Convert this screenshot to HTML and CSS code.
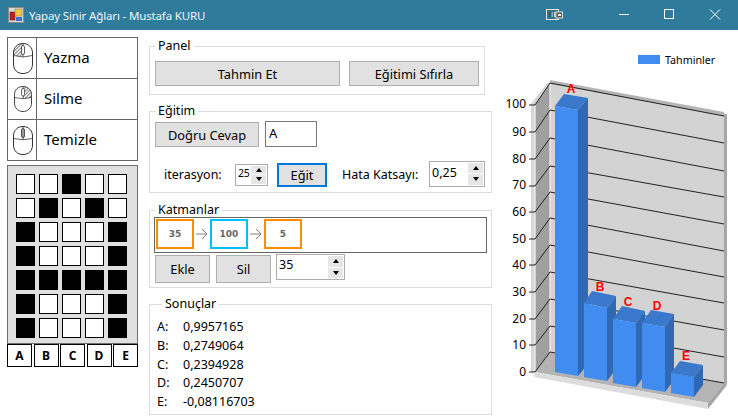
FILE: index.html
```html
<!DOCTYPE html>
<html lang="tr">
<head>
<meta charset="utf-8">
<title>Yapay Sinir Ağları</title>
<link rel="stylesheet" href="styles.css">
</head>
<body>
<header class="titlebar">
  <svg class="app-icon" width="16" height="16" viewBox="0 0 16 16">
    <rect x="0.5" y="0.5" width="15" height="15" fill="#d8d8d8" stroke="#8a8a8a"/>
    <rect x="2" y="5" width="5" height="8" fill="#c02020" stroke="#601010" stroke-width="0.5"/>
    <rect x="7" y="2" width="7" height="7" fill="#f0c840" stroke="#a08020" stroke-width="0.5"/>
    <rect x="8" y="10" width="6" height="4" fill="#4070d0"/>
  </svg>
  <span class="title">Yapay Sinir Ağları - Mustafa KURU</span>
  <svg class="win-snap" width="17" height="12" viewBox="0 0 17 12">
    <rect x="0.5" y="0.5" width="12" height="10" fill="#3d6f86" stroke="#e6e6e6"/>
    <rect x="3" y="3" width="1.5" height="5" fill="#1f5a78"/>
    <rect x="5.5" y="3" width="1.5" height="5" fill="#8fb0c0"/>
    <rect x="8" y="3" width="1.5" height="5" fill="#c8d6dd"/>
    <rect x="10" y="3" width="6.5" height="6" fill="#555" stroke="#ddd" stroke-width="1"/>
    <rect x="12" y="5" width="3" height="2" fill="#fff"/>
  </svg>
  <svg class="win-btn" width="46" height="30" viewBox="0 0 46 30"><path d="M19 14.500h10" stroke="#fff" fill="none"/></svg>
  <svg class="win-btn" width="46" height="30" viewBox="0 0 46 30"><rect x="18.500" y="9.500" width="9" height="9" stroke="#fff" fill="none"/></svg>
  <svg class="win-btn" width="46" height="30" viewBox="0 0 46 30"><path d="M18 9.500l10 10M28 9.500l-10 10" stroke="#fff" fill="none"/></svg>
</header>

<main class="app">
  <div class="left">
    <div class="tools">
      <div class="tool">
        <div class="tool-icon">
          <svg width="22" height="33" viewBox="0 0 22 33">
            <defs><pattern id="h1" width="2.500" height="2.500" patternUnits="userSpaceOnUse" patternTransform="rotate(45)"><rect width="2.500" height="2.500" fill="#fff"/><rect width="1" height="2.500" fill="#777"/></pattern></defs>
            <path d="M11 1.500C5.500 1.500 1.500 5.500 1.500 11V14H11V1.500Z" fill="url(#h1)"/>
            <path d="M11 1.500C16.500 1.500 20.500 5.500 20.500 11V22C20.500 28 16.500 31.500 11 31.500S1.500 28 1.500 22V11C1.500 5.500 5.500 1.500 11 1.500Z" fill="none" stroke="#333"/>
            <path d="M1.500 13.500Q11 16.500 20.500 13.500M11 1.500V6M11 12.500V15" fill="none" stroke="#333" stroke-width="0.8"/>
            <rect x="9.500" y="3.500" width="3" height="9" rx="1.500" fill="#fff" stroke="#333" stroke-width="0.8"/>
          </svg>
        </div>
        <div class="tool-label">Yazma</div>
      </div>
      <div class="tool">
        <div class="tool-icon">
          <svg width="20" height="28" viewBox="0 0 20 28">
            <defs><pattern id="h2" width="2.500" height="2.500" patternUnits="userSpaceOnUse" patternTransform="rotate(45)"><rect width="2.500" height="2.500" fill="#fff"/><rect width="1" height="2.500" fill="#777"/></pattern></defs>
            <path d="M10 1.500C15 1.500 18.500 5 18.500 9.500V13H10V1.500Z" fill="url(#h2)"/>
            <path d="M10 1.500C15 1.500 18.500 5 18.500 9.500V18C18.500 23 15 26.500 10 26.500S1.500 23 1.500 18V9.500C1.500 5 5 1.500 10 1.500Z" fill="none" stroke="#444"/>
            <path d="M1.500 12.500Q10 15 18.500 12.500M10 1.500V5M10 11V14" fill="none" stroke="#444" stroke-width="0.8"/>
            <rect x="8.500" y="3.500" width="3" height="7.500" rx="1.500" fill="#fff" stroke="#444" stroke-width="0.8"/>
          </svg>
        </div>
        <div class="tool-label">Silme</div>
      </div>
      <div class="tool">
        <div class="tool-icon">
          <svg width="22" height="31" viewBox="0 0 22 31">
            <path d="M11 1.500C16.500 1.500 20.500 5.500 20.500 11V20C20.500 26 16.500 29.500 11 29.500S1.500 26 1.500 20V11C1.500 5.500 5.500 1.500 11 1.500Z" fill="none" stroke="#333"/>
            <path d="M1.500 13.500Q11 16 20.500 13.500M11 1.500V5M11 12V15" fill="none" stroke="#333" stroke-width="0.8"/>
            <rect x="9.500" y="3.500" width="3" height="9" rx="1.500" fill="#999" stroke="#333" stroke-width="0.8"/>
          </svg>
        </div>
        <div class="tool-label">Temizle</div>
      </div>
    </div>

    <div class="matrix">
      <i class="px"></i><i class="px"></i><i class="px on"></i><i class="px"></i><i class="px"></i>
      <i class="px"></i><i class="px on"></i><i class="px"></i><i class="px on"></i><i class="px"></i>
      <i class="px on"></i><i class="px"></i><i class="px"></i><i class="px"></i><i class="px on"></i>
      <i class="px on"></i><i class="px"></i><i class="px"></i><i class="px"></i><i class="px on"></i>
      <i class="px on"></i><i class="px on"></i><i class="px on"></i><i class="px on"></i><i class="px on"></i>
      <i class="px on"></i><i class="px"></i><i class="px"></i><i class="px"></i><i class="px on"></i>
      <i class="px on"></i><i class="px"></i><i class="px"></i><i class="px"></i><i class="px on"></i>
    </div>
    <div class="letters">
      <div class="letter">A</div><div class="letter">B</div><div class="letter">C</div><div class="letter">D</div><div class="letter">E</div>
    </div>
  </div>

  <div class="middle">
    <fieldset class="group group-panel">
      <legend>Panel</legend>
      <div class="row-panel">
        <button class="btn btn-predict">Tahmin Et</button>
        <button class="btn btn-reset">Eğitimi Sıfırla</button>
      </div>
    </fieldset>

    <fieldset class="group group-train">
      <legend>Eğitim</legend>
      <div class="row-answer">
        <button class="btn btn-answer">Doğru Cevap</button>
        <div class="input input-answer">A</div>
      </div>
      <div class="row-iter">
        <span class="lbl lbl-iter">iterasyon:</span>
        <div class="spin spin-iter"><span class="spin-val">25</span><span class="arrows"><b class="up"></b><b class="down"></b></span></div>
        <button class="btn btn-train">Eğit</button>
        <span class="lbl lbl-err">Hata Katsayı:</span>
        <div class="spin spin-err"><span class="spin-val">0,25</span><span class="arrows"><b class="up"></b><b class="down"></b></span></div>
      </div>
    </fieldset>

    <fieldset class="group group-layers">
      <legend>Katmanlar</legend>
      <div class="layers">
        <div class="node node-orange">35</div>
        <svg class="arrow" width="16" height="14" viewBox="0 0 16 14"><path d="M2 7h11M8 2l5 5-5 5" fill="none" stroke="#808080"/></svg>
        <div class="node node-blue">100</div>
        <svg class="arrow" width="16" height="14" viewBox="0 0 16 14"><path d="M2 7h11M8 2l5 5-5 5" fill="none" stroke="#808080"/></svg>
        <div class="node node-orange">5</div>
      </div>
      <div class="row-layer">
        <button class="btn btn-layer">Ekle</button>
        <button class="btn btn-layer">Sil</button>
        <div class="spin spin-layer"><span class="spin-val">35</span><span class="arrows"><b class="up"></b><b class="down"></b></span></div>
      </div>
    </fieldset>

    <fieldset class="group group-results">
      <legend>Sonuçlar</legend>
      <div class="result"><span class="res-key">A:</span><span>0,9957165</span></div>
      <div class="result"><span class="res-key">B:</span><span>0,2749064</span></div>
      <div class="result"><span class="res-key">C:</span><span>0,2394928</span></div>
      <div class="result"><span class="res-key">D:</span><span>0,2450707</span></div>
      <div class="result"><span class="res-key">E:</span><span>-0,08116703</span></div>
    </fieldset>
  </div>

  <svg class="chart" width="243" height="390" viewBox="495 30 243 390">
    <rect x="638" y="55" width="22" height="9" fill="#418cf0"/>
    <text class="legend-text" x="665" y="64">Tahminler</text>

    <!-- walls and floor -->
    <path d="M531 104L548 82L550 83L535 105V372H531Z" fill="#d6d6d6"/>
    <path d="M535 105L550 83V352L535 372Z" fill="#a0a0a0"/>
    <path d="M550 83L724 115V383L550 352Z" fill="#d3d3d3"/>
    <path d="M550 83V352M535 105V372" stroke="#fff" fill="none"/>
    <path d="M550 80L724 112L725 116L550 84Z" fill="#b4b4b4"/>
    <path d="M724 114L727 114V385L724 383Z" fill="#a6a6a6"/>
    <path d="M535 372L550 352L724 383L708 403Z" fill="#b4b4b4"/>
    <path d="M535 372L708 403V409L534 377Z" fill="#dcdcdc"/>
    <path d="M708 403L724 383L727 385L708 409Z" fill="#a6a6a6"/>

    <!-- grid lines -->
    <g class="grid">
      <path d="M529 105H535L550 83L724 116"/>
      <path d="M529 132H535L550 110L724 143"/>
      <path d="M529 159H535L550 138L724 171"/>
      <path d="M529 186H535L550 166L724 197"/>
      <path d="M529 212H535L550 192L724 224"/>
      <path d="M529 239H535L550 218L724 251"/>
      <path d="M529 265H535L550 245L724 277"/>
      <path d="M529 292H535L550 272L724 303"/>
      <path d="M529 319H535L550 299L724 330"/>
      <path d="M529 345H535L550 326L724 357"/>
      <path d="M529 372H535L550 352L724 383"/>
    </g>

    <g class="axis">
      <text x="526" y="108">100</text>
      <text x="526" y="136">90</text>
      <text x="526" y="163">80</text>
      <text x="526" y="189">70</text>
      <text x="526" y="216">60</text>
      <text x="526" y="243">50</text>
      <text x="526" y="269">40</text>
      <text x="526" y="296">30</text>
      <text x="526" y="323">20</text>
      <text x="526" y="349">10</text>
      <text x="526" y="376">0</text>
    </g>

    <!-- bars: top, side, front -->
    <path class="bar-top" d="M555 106L578 110L588 98L564 94Z"/>
    <path class="bar-side" d="M578 110L588 98V364L578 376Z"/>
    <path class="bar-front" d="M555 106L578 110V376L555 372Z"/>

    <path class="bar-top" d="M584 303L607 308L616 296L592 291Z"/>
    <path class="bar-side" d="M607 308L616 296V369L607 381Z"/>
    <path class="bar-front" d="M584 303L607 308V381L584 377Z"/>

    <path class="bar-top" d="M613 319L636 323L645 311L622 306Z"/>
    <path class="bar-side" d="M636 323L645 311V375L636 387Z"/>
    <path class="bar-front" d="M613 319L636 323V387L613 383Z"/>

    <path class="bar-top" d="M642 323L665 327L674 314L651 310Z"/>
    <path class="bar-side" d="M665 327L674 314V380L665 392Z"/>
    <path class="bar-front" d="M642 323L665 327V392L642 388Z"/>

    <path class="bar-top" d="M671 373L694 377L703 365L680 361Z"/>
    <path class="bar-side" d="M694 377L703 365V385L694 397Z"/>
    <path class="bar-front" d="M671 373L694 377V397L671 393Z"/>

    <g class="bar-label">
      <text x="571" y="93">A</text>
      <text x="600" y="291">B</text>
      <text x="628" y="306">C</text>
      <text x="657" y="310">D</text>
      <text x="686" y="360">E</text>
    </g>
  </svg>
</main>
</body>
</html>
```

FILE: styles.css
```css
* { box-sizing: border-box; }

html, body {
  margin: 0;
  padding: 0;
}

body {
  width: 738px;
  height: 420px;
  overflow: hidden;
  background: #fff;
  color: #000;
  font-family: "Noto Sans", "Open Sans", sans-serif;
  font-size: 12.5px;
}

.titlebar {
  height: 30px;
  background: #2e7b9c;
  display: flex;
  align-items: center;
  color: #fff;
}

.app-icon { margin-left: 8px; flex: none; }

.title {
  margin-left: 5px;
  font-size: 11.500px;
  letter-spacing: -0.150px;
  flex: 1;
  color: #eef5f8;
}

.win-snap { margin-right: 37px; flex: none; }
.win-btn { flex: none; }

.app {
  display: flex;
  align-items: flex-start;
  height: 390px;
}

/* left column */
.left {
  width: 131px;
  margin: 7px 11px 0 7px;
  flex: none;
}

.tools { border: 1px solid #666; }

.tool {
  display: flex;
  height: 41px;
  border-bottom: 1px solid #666;
}
.tool:last-child { border-bottom: 0; height: 40px; }

.tool-icon {
  width: 29px;
  padding-left: 2px;
  border-right: 1px solid #666;
  display: flex;
  align-items: center;
  justify-content: center;
  flex: none;
}

.tool-label {
  padding-left: 7px;
  font-size: 15px;
  line-height: 38px;
}

.matrix {
  margin-top: 4px;
  height: 179px;
  background: #e0e0e0;
  border: 1px solid #6e6e6e;
  padding: 8px;
  display: grid;
  grid-template-columns: repeat(5, 19px);
  grid-auto-rows: 20px;
  column-gap: 4px;
  row-gap: 4px;
}

.px { background: #fff; border: 1px solid #000; }
.px.on { background: #000; }

.letters {
  display: flex;
  justify-content: space-between;
}

.letter {
  width: 25px;
  height: 23px;
  border: 1px solid #000;
  text-align: center;
  font-weight: 700;
  font-size: 12px;
  line-height: 21px;
}

/* middle column */
.middle {
  width: 346px;
  padding-top: 9px;
  flex: none;
}

.group {
  width: 343px;
  margin: 0 0 9px;
  padding: 0;
  min-width: 0;
  border: 1px solid #dcdcdc;
}

.group legend {
  margin-left: 5px;
  padding: 0 3px;
  font-size: 12.500px;
  line-height: 14px;
}

.btn {
  display: block;
  margin: 0;
  padding: 0;
  height: 25px;
  background: #e1e1e1;
  border: 1px solid #adadad;
  font: inherit;
  font-size: 12.800px;
  color: #000;
}

.group-panel { width: 336px; height: 56px; }
.row-panel {
  display: flex;
  gap: 9px;
  padding: 8px 0 0 5px;
}
.btn-predict { width: 185px; }
.btn-reset { width: 130px; }

.group-train { height: 89px; margin-bottom: 10px; }
.row-answer {
  display: flex;
  gap: 6px;
  padding: 3px 0 0 5px;
  align-items: flex-start;
}
.btn-answer { width: 104px; margin-top: 1px; }

.input {
  background: #fff;
  border: 1px solid #7a7a7a;
  padding-left: 3px;
}
.input-answer { width: 52px; height: 26px; line-height: 22px; font-size: 13px; }

.row-iter {
  display: flex;
  align-items: center;
  height: 26px;
  margin-top: 14px;
  padding-left: 14px;
}

.lbl-iter { width: 71px; }
.lbl-err { width: 87px; margin-left: 15px; }

.spin {
  display: flex;
  justify-content: space-between;
  background: #fff;
  border: 1px solid #acacac;
  padding: 1px;
}
.spin-val { padding-left: 1px; line-height: 18px; }
.spin-iter { width: 33px; height: 22px; margin-top: 1px; font-size: 10.500px; letter-spacing: -0.300px; }
.spin-iter .spin-val { line-height: 15px; }
.spin-err { width: 56px; height: 26px; margin-top: -1px; }
.spin-err .spin-val { line-height: 20px; }
.spin-layer { width: 69px; height: 26px; }

.arrows {
  width: 15px;
  display: flex;
  flex-direction: column;
  gap: 1px;
}
.arrows b {
  flex: 1;
  background: #e6e6e6;
  display: flex;
  align-items: center;
  justify-content: center;
}
.arrows b::after {
  content: "";
  border-left: 3.500px solid transparent;
  border-right: 3.500px solid transparent;
}
.arrows .up::after { border-bottom: 4px solid #000; }
.arrows .down::after { border-top: 4px solid #000; }

.btn-train {
  width: 50px;
  height: 24px;
  margin-left: 9px;
  border: 2px solid #0078d7;
  margin-top: 1px;
}

.group-layers { height: 85px; }

.layers {
  width: 333px;
  height: 36px;
  margin-left: 4px;
  border: 1px solid #666;
  padding: 1px;
  display: flex;
  align-items: flex-start;
}

.node {
  width: 38px;
  height: 30px;
  border: 2px solid;
  font-family: "DejaVu Sans", sans-serif;
  font-size: 9px;
  font-weight: 700;
  color: #666;
  text-align: center;
  line-height: 27px;
}
.node-orange { border-color: #ff8c00; }
.node-blue { border-color: #00bfff; }
.arrow { flex: none; margin-top: 8px; }

.row-layer {
  display: flex;
  align-items: flex-start;
  padding: 1px 0 0 5px;
}
.btn-layer { width: 55px; height: 28px; margin: 1px 6px 0 0; }
.row-layer .spin { margin-left: -1px; }

.group-results { height: 118px; margin-bottom: 0; padding: 7px 0 0 7px; }
.result { display: flex; height: 18.800px; line-height: 18px; }
.res-key { width: 26px; }

/* chart */
.chart { flex: none; display: block; }

.legend-text {
  font-family: "Noto Sans", sans-serif;
  font-size: 10.700px;
  fill: #000;
}

.grid path { fill: none; stroke: #222; stroke-width: 1; }

.axis text {
  font-family: "Noto Sans", sans-serif;
  font-size: 12px;
  text-anchor: end;
  fill: #000;
}

.bar-front { fill: #418cf0; }
.bar-side { fill: #3168b4; }
.bar-top { fill: #3a78cc; }

.bar-label text {
  font-family: "Liberation Sans", sans-serif;
  font-size: 12px;
  font-weight: 700;
  text-anchor: middle;
  fill: #f00;
}
```
